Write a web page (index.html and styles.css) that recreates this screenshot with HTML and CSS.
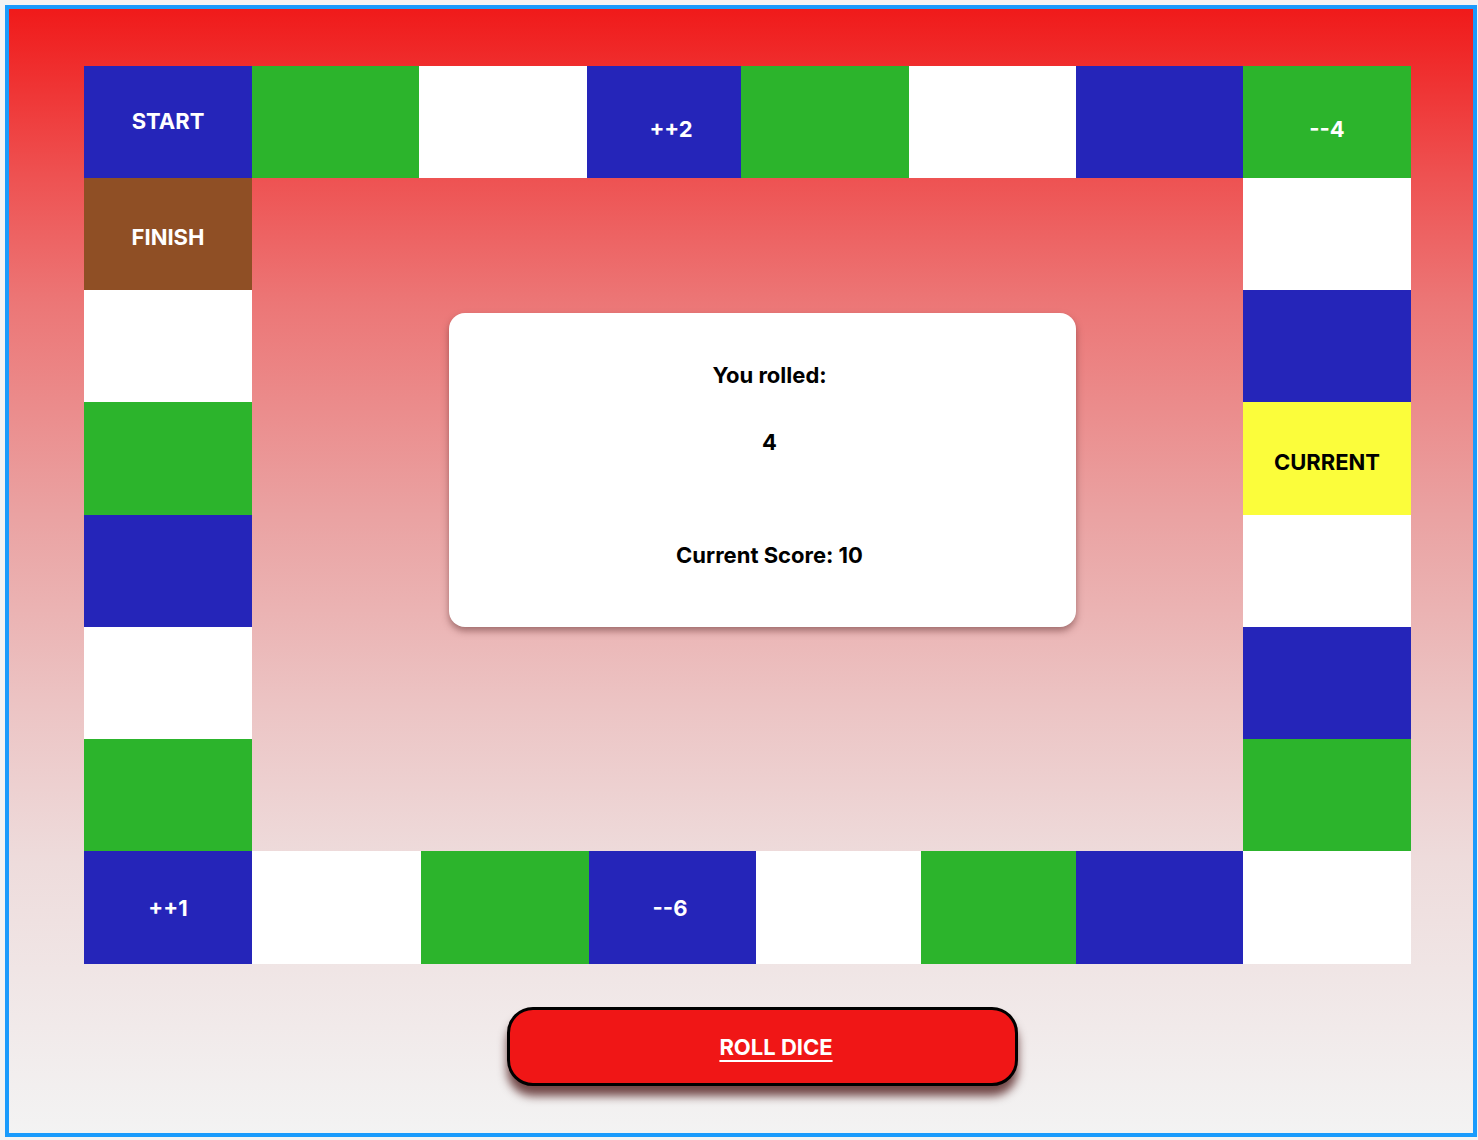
FILE: index.html
```html
<!DOCTYPE html>
<html lang="en">
<head>
<meta charset="utf-8">
<title>Board Game</title>
<link rel="stylesheet" href="styles.css">
</head>
<body>
<div class="frame">
  <div class="board">
    <div class="row row-top">
      <div class="cell blue up1">START</div>
      <div class="cell green"></div>
      <div class="cell white"></div>
      <div class="cell blue down7 right7">++2</div>
      <div class="cell green"></div>
      <div class="cell white"></div>
      <div class="cell blue"></div>
      <div class="cell green down7">--4</div>
    </div>
    <div class="middle">
      <div class="cell brown down3 l1">FINISH</div>
      <div class="cell white l2"></div>
      <div class="cell green l3"></div>
      <div class="cell blue l4"></div>
      <div class="cell white l5"></div>
      <div class="cell green l6"></div>

      <div class="card">
        <p class="card-line rolled">You rolled:</p>
        <p class="card-line value">4</p>
        <p class="card-line score">Current Score: 10</p>
      </div>

      <div class="cell white r1"></div>
      <div class="cell blue r2"></div>
      <div class="cell yellow down3 r3">CURRENT</div>
      <div class="cell white r4"></div>
      <div class="cell blue r5"></div>
      <div class="cell green r6"></div>
    </div>
    <div class="row row-bottom">
      <div class="cell blue">++1</div>
      <div class="cell white"></div>
      <div class="cell green"></div>
      <div class="cell blue left3">--6</div>
      <div class="cell white"></div>
      <div class="cell green"></div>
      <div class="cell blue"></div>
      <div class="cell white"></div>
    </div>
  </div>
  <button class="roll" type="button">ROLL DICE</button>
</div>
</body>
</html>
```

FILE: styles.css
```css
* { box-sizing: border-box; }

html, body {
  margin: 0;
  padding: 0;
  background: #f3f3f3;
}

body {
  font-family: Inter, "Liberation Sans", sans-serif;
  padding: 5px 1px 3px 5px;
}

.frame {
  width: 1472px;
  height: 1132px;
  border: 4px solid #1a9bfc;
  background: linear-gradient(to bottom,
    #f01a1a 0%,
    #ee5252 15%,
    #ec7676 26%,
    #eaa2a2 45%,
    #ecc4c4 62%,
    #eedcdc 76%,
    #f3f3f3 100%);
  padding: 57px 62px 0 75px;
}

.board {
  width: 1327px;
}

.row {
  display: grid;
  height: 112px;
}

.row-top {
  grid-template-columns: 168px 167px 168px 154px 168px 167px 167px 168px;
}

.row-bottom {
  height: 113px;
  grid-template-columns: 168px 169px 168px 167px 165px 155px 167px 168px;
}

.middle {
  display: grid;
  grid-template-columns: 168px 991px 168px;
  grid-template-rows: 112px 112px 113px 112px 112px 112px;
}

.cell {
  display: flex;
  align-items: center;
  justify-content: center;
  font-weight: 700;
  font-size: 22px;
  color: #fff;
}

.blue { background: #2525b9; }
.green { background: #2cb42c; }
.white { background: #fff; }
.brown { background: #8f4f25; }
.yellow { background: #fbfd3b; color: #000; }

.up1 { padding-bottom: 2px; }
.down3 { padding-top: 6px; }
.down7 { padding-top: 13px; }
.right7 { padding-left: 14px; }
.left3 { padding-right: 5px; }

.l1 { grid-column: 1; grid-row: 1; }
.l2 { grid-column: 1; grid-row: 2; }
.l3 { grid-column: 1; grid-row: 3; }
.l4 { grid-column: 1; grid-row: 4; }
.l5 { grid-column: 1; grid-row: 5; }
.l6 { grid-column: 1; grid-row: 6; }
.r1 { grid-column: 3; grid-row: 1; }
.r2 { grid-column: 3; grid-row: 2; }
.r3 { grid-column: 3; grid-row: 3; }
.r4 { grid-column: 3; grid-row: 4; }
.r5 { grid-column: 3; grid-row: 5; }
.r6 { grid-column: 3; grid-row: 6; }

.card {
  grid-column: 2;
  grid-row: 1 / span 6;
  align-self: start;
  margin: 135px 0 0 197px;
  width: 627px;
  height: 314px;
  background: #fff;
  border-radius: 16px;
  box-shadow: 0 4px 7px rgba(90, 40, 40, 0.5);
  display: flex;
  flex-direction: column;
  align-items: center;
  padding: 49px 0 0 14px;
}

.card-line {
  margin: 0;
  font-size: 22px;
  line-height: 26px;
  font-weight: 700;
  color: #000;
}

.value { margin-top: 41px; }
.score { margin-top: 87px; }

.roll {
  display: block;
  margin: 43px 0 0 423px;
  width: 511px;
  height: 79px;
  border: 3px solid #000;
  border-radius: 26px;
  background: #f01616;
  color: #fff;
  font-family: Inter, "Liberation Sans", sans-serif;
  font-weight: 700;
  font-size: 22px;
  text-decoration: underline;
  text-decoration-thickness: 2px;
  text-underline-offset: 5px;
  padding: 0 0 0 27px;
  box-shadow: 0 10px 10px rgba(60, 0, 0, 0.7);
  cursor: pointer;
}
```
